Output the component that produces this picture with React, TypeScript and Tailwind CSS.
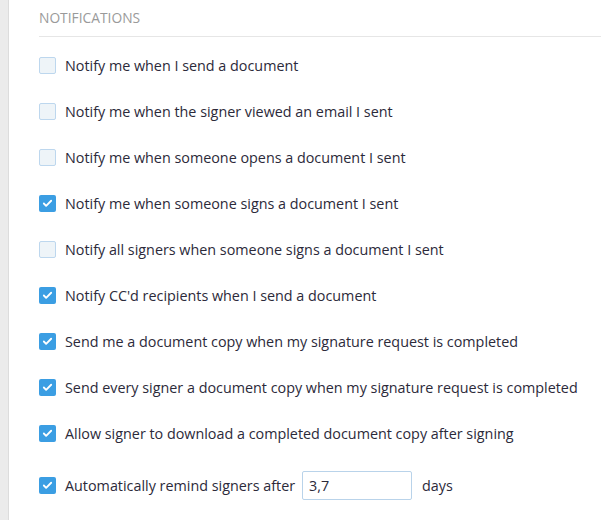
import { Check } from "lucide-react"

const items = [
  { label: "Notify me when I send a document", checked: false },
  { label: "Notify me when the signer viewed an email I sent", checked: false },
  { label: "Notify me when someone opens a document I sent", checked: false },
  { label: "Notify me when someone signs a document I sent", checked: true },
  { label: "Notify all signers when someone signs a document I sent", checked: false },
  { label: "Notify CC'd recipients when I send a document", checked: true },
  { label: "Send me a document copy when my signature request is completed", checked: true },
  { label: "Send every signer a document copy when my signature request is completed", checked: true },
  { label: "Allow signer to download a completed document copy after signing", checked: true },
]

function Box({ checked }: { checked: boolean }) {
  return checked ? (
    <span className="flex h-[17px] w-[17px] shrink-0 items-center justify-center rounded-[2px] bg-[#3b9ee3]">
      <Check className="h-[11px] w-[11px] text-white" strokeWidth={4} />
    </span>
  ) : (
    <span className="h-[17px] w-[17px] shrink-0 rounded-[2px] border border-[#bdd7ee] bg-[#eef4f8]" />
  )
}

export default function App() {
  return (
    <div className="flex min-h-[520px] bg-white font-['Open_Sans',sans-serif] text-[14.35px] text-[#2c2a3a]">
      <div className="w-[9px] shrink-0 border-r border-[#dcdcdc] bg-[#ebebeb]" />
      <div className="flex-1 pl-[30px]">
        <div className="border-b border-[#e6e6e6] pt-[8px] pb-[7px] text-[13.8px] uppercase text-[#9a9a9a]">
          Notifications
        </div>
        <div className="pt-[7px]">
          {items.map((it) => (
            <label key={it.label} className="flex h-[46px] items-center gap-[9px] pb-[2px]">
              <Box checked={it.checked} />
              <span>{it.label}</span>
            </label>
          ))}
          <div className="mt-[5px] flex h-[46px] items-center gap-[9px]">
            <Box checked />
            <span>Automatically remind signers after</span>
            <input
              defaultValue="3,7"
              className="ml-[-2px] h-[29px] w-[110px] rounded-[2px] border border-[#b9d3ea] px-[6px] text-[14.35px] text-[#2c2a3a] outline-none"
            />
            <span className="ml-[1px]">days</span>
          </div>
        </div>
      </div>
    </div>
  )
}
